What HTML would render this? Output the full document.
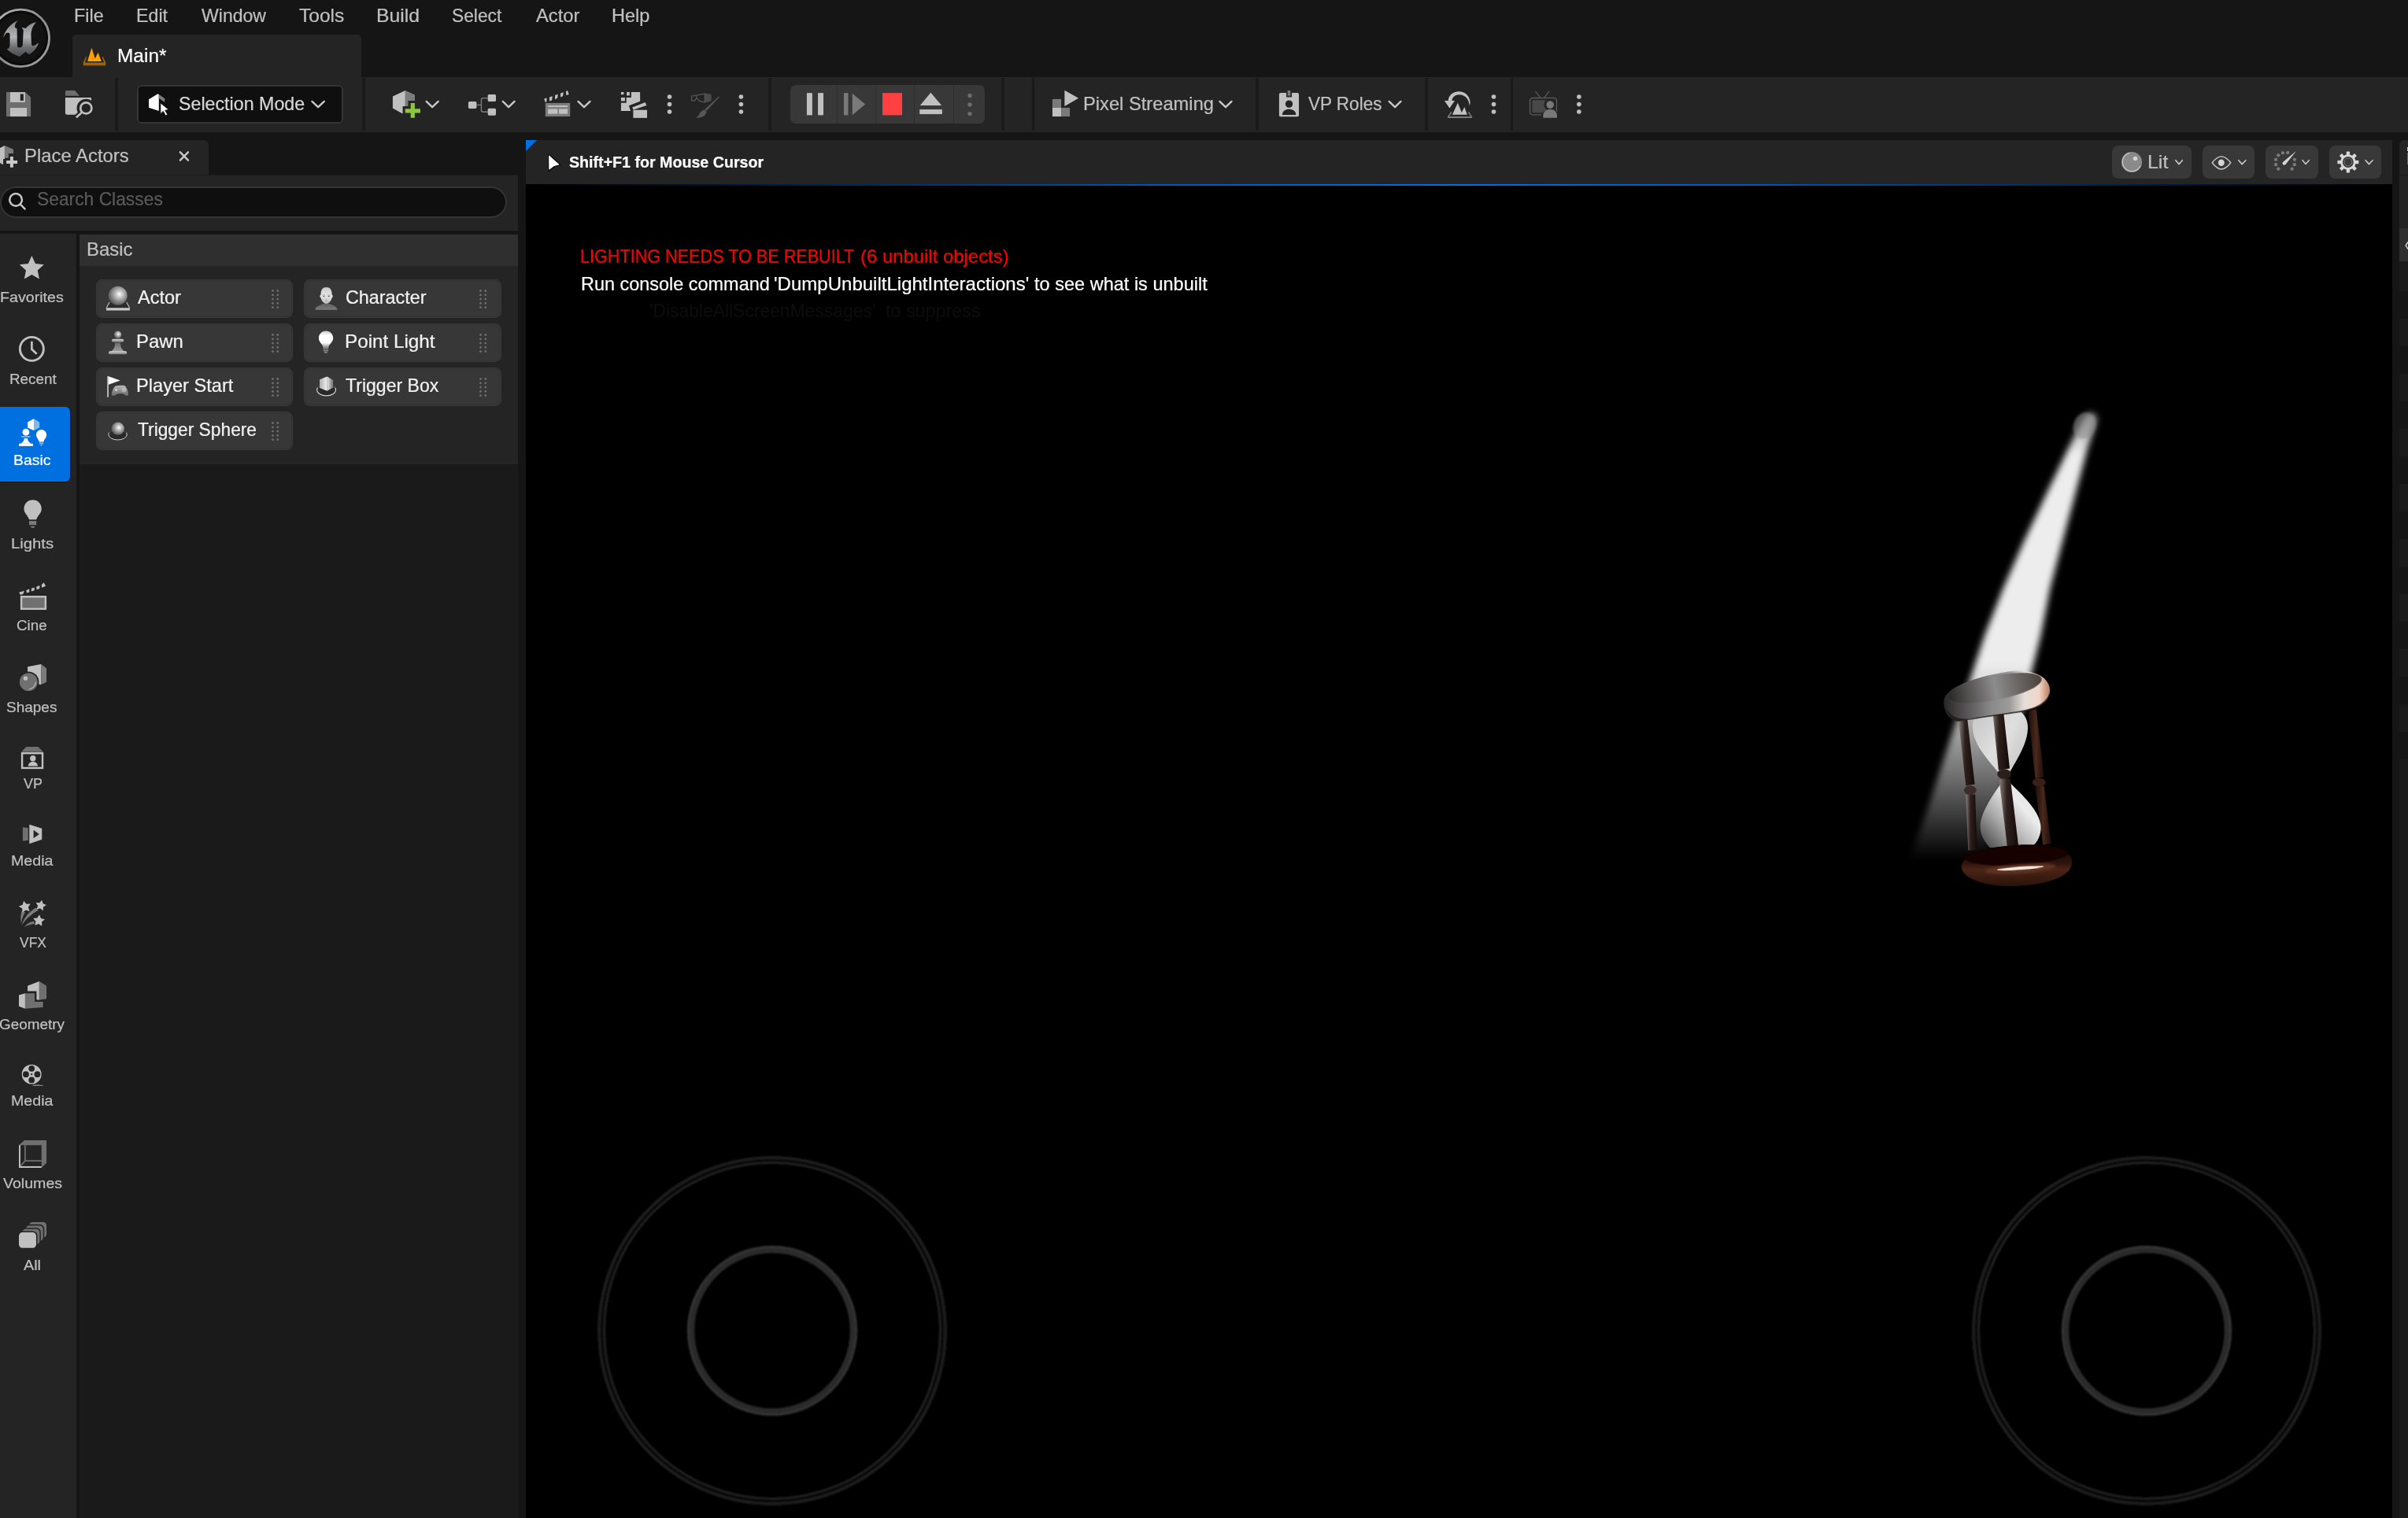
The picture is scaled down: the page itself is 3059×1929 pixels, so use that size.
<!DOCTYPE html>
<html lang="en"><head><meta charset="utf-8"><title>Unreal Editor - Main</title>
<style>
html,body{margin:0;padding:0;background:#151515;}
body{width:3059px;height:1929px;position:relative;overflow:hidden;font-family:"Liberation Sans",sans-serif;}
.b{position:absolute;display:block;}
.t{position:absolute;white-space:nowrap;transform-origin:0 0;display:block;-webkit-text-stroke:0.22px currentColor;}
</style></head><body>
<div class="b" style="left:92px;top:44px;width:367px;height:54px;background:#242424;border-radius:5px 5px 0 0;"></div>
<div class="b" style="left:0px;top:98px;width:3059px;height:70px;background:#242424;"></div>
<div class="b" style="left:146.3px;top:99px;width:3.6px;height:67px;background:#1a1a1a;"></div>
<div class="b" style="left:460.2px;top:99px;width:4px;height:67px;background:#1a1a1a;"></div>
<div class="b" style="left:976.2px;top:99px;width:4px;height:67px;background:#1a1a1a;"></div>
<div class="b" style="left:1271.9px;top:99px;width:4.2px;height:67px;background:#1a1a1a;"></div>
<div class="b" style="left:1310.9px;top:99px;width:3.1px;height:67px;background:#1a1a1a;"></div>
<div class="b" style="left:1595px;top:99px;width:3.75px;height:67px;background:#1a1a1a;"></div>
<div class="b" style="left:1810.4px;top:99px;width:3.8px;height:67px;background:#1a1a1a;"></div>
<div class="b" style="left:1918.9px;top:99px;width:3.3px;height:67px;background:#1a1a1a;"></div>
<div class="b" style="left:174px;top:108px;width:262px;height:49px;background:#0f0f0f;border-radius:5.5px;box-shadow:inset 0 0 0 2px #353535;"></div>
<div class="b" style="left:1004.4px;top:107.9px;width:246.4px;height:48.9px;background:#383838;border-radius:7px;"></div>
<div class="b" style="left:1062.75px;top:108px;width:1.5px;height:49px;background:#2e2e2e;"></div>
<div class="b" style="left:1111.75px;top:108px;width:1.5px;height:49px;background:#2e2e2e;"></div>
<div class="b" style="left:1160.75px;top:108px;width:1.5px;height:49px;background:#2e2e2e;"></div>
<div class="b" style="left:1210.75px;top:108px;width:1.5px;height:49px;background:#2e2e2e;"></div>
<span class="t" style="left:94.38px;top:8.35px;font-size:24.3px;line-height:24.3px;color:#c0c0c0;transform:scaleX(0.9630);">File</span>
<span class="t" style="left:173.14px;top:8.35px;font-size:24.3px;line-height:24.3px;color:#c0c0c0;transform:scaleX(0.9564);">Edit</span>
<span class="t" style="left:255.88px;top:8.35px;font-size:24.3px;line-height:24.3px;color:#c0c0c0;transform:scaleX(0.9492);">Window</span>
<span class="t" style="left:379.51px;top:8.35px;font-size:24.3px;line-height:24.3px;color:#c0c0c0;transform:scaleX(1.0108);">Tools</span>
<span class="t" style="left:477.52px;top:8.35px;font-size:24.3px;line-height:24.3px;color:#c0c0c0;transform:scaleX(1.0189);">Build</span>
<span class="t" style="left:573.98px;top:8.35px;font-size:24.3px;line-height:24.3px;color:#c0c0c0;transform:scaleX(0.9363);">Select</span>
<span class="t" style="left:680.75px;top:8.35px;font-size:24.3px;line-height:24.3px;color:#c0c0c0;transform:scaleX(0.9777);">Actor</span>
<span class="t" style="left:777.12px;top:7.85px;font-size:24.3px;line-height:24.3px;color:#c0c0c0;transform:scaleX(0.9677);">Help</span>
<span class="t" style="left:148.79px;top:59.75px;font-size:23.5px;line-height:23.5px;color:#ffffff;transform:scaleX(1.0401);">Main*</span>
<span class="t" style="left:226.95px;top:119.50px;font-size:24px;line-height:24px;color:#d8d8d8;transform:scaleX(0.9681);">Selection Mode</span>
<span class="t" style="left:1376.10px;top:119.50px;font-size:24px;line-height:24px;color:#c0c0c0;transform:scaleX(0.9877);">Pixel Streaming</span>
<span class="t" style="left:1662.39px;top:119.50px;font-size:24px;line-height:24px;color:#c0c0c0;transform:scaleX(0.9378);">VP Roles</span>
<div class="b" style="left:0px;top:178px;width:265px;height:44px;background:#242424;border-radius:0 6px 0 0;"></div>
<div class="b" style="left:0px;top:222px;width:658px;height:71px;background:#242424;"></div>
<div class="b" style="left:0px;top:222px;width:658px;height:1px;background:#1c1c1c;"></div>
<div class="b" style="left:0px;top:237px;width:643.5px;height:39.5px;background:#0f0f0f;border-radius:20px;box-shadow:inset 0 0 0 2px #353535;"></div>
<span class="t" style="left:31.09px;top:185.50px;font-size:24px;line-height:24px;color:#c0c0c0;transform:scaleX(0.9948);">Place Actors</span>
<span class="t" style="left:46.97px;top:241.20px;font-size:24px;line-height:24px;color:#5a5a5a;transform:scaleX(0.9507);">Search Classes</span>
<div class="b" style="left:0px;top:297px;width:97px;height:1632px;background:#242424;"></div>
<div class="b" style="left:101px;top:297.5px;width:557px;height:40.5px;background:#2f2f2f;"></div>
<div class="b" style="left:101px;top:338px;width:557px;height:251.5px;background:#242424;"></div>
<div class="b" style="left:101px;top:589.5px;width:557px;height:1339.5px;background:#1a1a1a;"></div>
<span class="t" style="left:110.09px;top:304.50px;font-size:24px;line-height:24px;color:#c0c0c0;transform:scaleX(0.9972);">Basic</span>
<div class="b" style="left:122.1px;top:355px;width:250.4px;height:49px;background:#373737;border-radius:8.5px;box-shadow:inset 0 0 0 1px #393939,inset 0 0 0 2px #313131;"></div>
<span class="t" style="left:175.00px;top:366.25px;font-size:24px;line-height:24px;color:#f2f2f2;transform:scaleX(0.9809);">Actor</span>
<svg class="b" style="left:344.75px;top:368.0px;" width="10.0" height="25.0" viewBox="0 0 10 25"><g fill="#6e6e6e"><circle cx="1.5" cy="1.5" r="1.4"/><circle cx="1.5" cy="6.8" r="1.4"/><circle cx="1.5" cy="12.1" r="1.4"/><circle cx="1.5" cy="17.4" r="1.4"/><circle cx="1.5" cy="22.7" r="1.4"/><circle cx="7.75" cy="1.5" r="1.4"/><circle cx="7.75" cy="6.8" r="1.4"/><circle cx="7.75" cy="12.1" r="1.4"/><circle cx="7.75" cy="17.4" r="1.4"/><circle cx="7.75" cy="22.7" r="1.4"/></g></svg>
<div class="b" style="left:385.85px;top:355px;width:251px;height:49px;background:#373737;border-radius:8.5px;box-shadow:inset 0 0 0 1px #393939,inset 0 0 0 2px #313131;"></div>
<span class="t" style="left:438.83px;top:365.75px;font-size:24px;line-height:24px;color:#f2f2f2;transform:scaleX(0.9730);">Character</span>
<svg class="b" style="left:608.5px;top:368.0px;" width="10.0" height="25.0" viewBox="0 0 10 25"><g fill="#6e6e6e"><circle cx="1.5" cy="1.5" r="1.4"/><circle cx="1.5" cy="6.8" r="1.4"/><circle cx="1.5" cy="12.1" r="1.4"/><circle cx="1.5" cy="17.4" r="1.4"/><circle cx="1.5" cy="22.7" r="1.4"/><circle cx="7.75" cy="1.5" r="1.4"/><circle cx="7.75" cy="6.8" r="1.4"/><circle cx="7.75" cy="12.1" r="1.4"/><circle cx="7.75" cy="17.4" r="1.4"/><circle cx="7.75" cy="22.7" r="1.4"/></g></svg>
<div class="b" style="left:122.1px;top:411px;width:250.4px;height:49px;background:#373737;border-radius:8.5px;box-shadow:inset 0 0 0 1px #393939,inset 0 0 0 2px #313131;"></div>
<span class="t" style="left:173.09px;top:422.25px;font-size:24px;line-height:24px;color:#f2f2f2;transform:scaleX(0.9952);">Pawn</span>
<svg class="b" style="left:344.75px;top:424.0px;" width="10.0" height="25.0" viewBox="0 0 10 25"><g fill="#6e6e6e"><circle cx="1.5" cy="1.5" r="1.4"/><circle cx="1.5" cy="6.8" r="1.4"/><circle cx="1.5" cy="12.1" r="1.4"/><circle cx="1.5" cy="17.4" r="1.4"/><circle cx="1.5" cy="22.7" r="1.4"/><circle cx="7.75" cy="1.5" r="1.4"/><circle cx="7.75" cy="6.8" r="1.4"/><circle cx="7.75" cy="12.1" r="1.4"/><circle cx="7.75" cy="17.4" r="1.4"/><circle cx="7.75" cy="22.7" r="1.4"/></g></svg>
<div class="b" style="left:385.85px;top:411px;width:251px;height:49px;background:#373737;border-radius:8.5px;box-shadow:inset 0 0 0 1px #393939,inset 0 0 0 2px #313131;"></div>
<span class="t" style="left:437.56px;top:421.75px;font-size:24px;line-height:24px;color:#f2f2f2;transform:scaleX(1.0102);">Point Light</span>
<svg class="b" style="left:608.5px;top:424.0px;" width="10.0" height="25.0" viewBox="0 0 10 25"><g fill="#6e6e6e"><circle cx="1.5" cy="1.5" r="1.4"/><circle cx="1.5" cy="6.8" r="1.4"/><circle cx="1.5" cy="12.1" r="1.4"/><circle cx="1.5" cy="17.4" r="1.4"/><circle cx="1.5" cy="22.7" r="1.4"/><circle cx="7.75" cy="1.5" r="1.4"/><circle cx="7.75" cy="6.8" r="1.4"/><circle cx="7.75" cy="12.1" r="1.4"/><circle cx="7.75" cy="17.4" r="1.4"/><circle cx="7.75" cy="22.7" r="1.4"/></g></svg>
<div class="b" style="left:122.1px;top:467px;width:250.4px;height:49px;background:#373737;border-radius:8.5px;box-shadow:inset 0 0 0 1px #393939,inset 0 0 0 2px #313131;"></div>
<span class="t" style="left:173.11px;top:477.75px;font-size:24px;line-height:24px;color:#f2f2f2;transform:scaleX(0.9839);">Player Start</span>
<svg class="b" style="left:344.75px;top:480.0px;" width="10.0" height="25.0" viewBox="0 0 10 25"><g fill="#6e6e6e"><circle cx="1.5" cy="1.5" r="1.4"/><circle cx="1.5" cy="6.8" r="1.4"/><circle cx="1.5" cy="12.1" r="1.4"/><circle cx="1.5" cy="17.4" r="1.4"/><circle cx="1.5" cy="22.7" r="1.4"/><circle cx="7.75" cy="1.5" r="1.4"/><circle cx="7.75" cy="6.8" r="1.4"/><circle cx="7.75" cy="12.1" r="1.4"/><circle cx="7.75" cy="17.4" r="1.4"/><circle cx="7.75" cy="22.7" r="1.4"/></g></svg>
<div class="b" style="left:385.85px;top:467px;width:251px;height:49px;background:#373737;border-radius:8.5px;box-shadow:inset 0 0 0 1px #393939,inset 0 0 0 2px #313131;"></div>
<span class="t" style="left:439.04px;top:477.75px;font-size:24px;line-height:24px;color:#f2f2f2;transform:scaleX(0.9600);">Trigger Box</span>
<svg class="b" style="left:608.5px;top:480.0px;" width="10.0" height="25.0" viewBox="0 0 10 25"><g fill="#6e6e6e"><circle cx="1.5" cy="1.5" r="1.4"/><circle cx="1.5" cy="6.8" r="1.4"/><circle cx="1.5" cy="12.1" r="1.4"/><circle cx="1.5" cy="17.4" r="1.4"/><circle cx="1.5" cy="22.7" r="1.4"/><circle cx="7.75" cy="1.5" r="1.4"/><circle cx="7.75" cy="6.8" r="1.4"/><circle cx="7.75" cy="12.1" r="1.4"/><circle cx="7.75" cy="17.4" r="1.4"/><circle cx="7.75" cy="22.7" r="1.4"/></g></svg>
<div class="b" style="left:122.1px;top:523px;width:250.4px;height:49px;background:#373737;border-radius:8.5px;box-shadow:inset 0 0 0 1px #393939,inset 0 0 0 2px #313131;"></div>
<span class="t" style="left:174.54px;top:533.75px;font-size:24px;line-height:24px;color:#f2f2f2;transform:scaleX(0.9488);">Trigger Sphere</span>
<svg class="b" style="left:344.75px;top:536.0px;" width="10.0" height="25.0" viewBox="0 0 10 25"><g fill="#6e6e6e"><circle cx="1.5" cy="1.5" r="1.4"/><circle cx="1.5" cy="6.8" r="1.4"/><circle cx="1.5" cy="12.1" r="1.4"/><circle cx="1.5" cy="17.4" r="1.4"/><circle cx="1.5" cy="22.7" r="1.4"/><circle cx="7.75" cy="1.5" r="1.4"/><circle cx="7.75" cy="6.8" r="1.4"/><circle cx="7.75" cy="12.1" r="1.4"/><circle cx="7.75" cy="17.4" r="1.4"/><circle cx="7.75" cy="22.7" r="1.4"/></g></svg>
<div class="b" style="left:0px;top:516.7px;width:89.3px;height:95.7px;background:#0070e0;border-radius:0 6px 6px 0;box-shadow:0.8px 0.8px 0 #161616;"></div>
<span class="t" style="left:0.43px;top:369.20px;font-size:18.8px;line-height:18.8px;color:#c0c0c0;transform:scaleX(1.0452);">Favorites</span>
<span class="t" style="left:11.99px;top:472.90px;font-size:18.8px;line-height:18.8px;color:#c0c0c0;transform:scaleX(1.0017);">Recent</span>
<span class="t" style="left:17.45px;top:576.20px;font-size:18.8px;line-height:18.8px;color:#ffffff;transform:scaleX(1.0320);">Basic</span>
<span class="t" style="left:13.87px;top:681.50px;font-size:18.8px;line-height:18.8px;color:#c0c0c0;transform:scaleX(1.0805);">Lights</span>
<span class="t" style="left:21.06px;top:786.10px;font-size:18.8px;line-height:18.8px;color:#c0c0c0;transform:scaleX(1.0014);">Cine</span>
<span class="t" style="left:8.14px;top:889.50px;font-size:18.8px;line-height:18.8px;color:#c0c0c0;transform:scaleX(1.0108);">Shapes</span>
<span class="t" style="left:29.91px;top:987.00px;font-size:18.8px;line-height:18.8px;color:#c0c0c0;transform:scaleX(0.9554);">VP</span>
<span class="t" style="left:13.93px;top:1085.10px;font-size:18.8px;line-height:18.8px;color:#c0c0c0;transform:scaleX(1.0437);">Media</span>
<span class="t" style="left:25.41px;top:1189.00px;font-size:18.8px;line-height:18.8px;color:#c0c0c0;transform:scaleX(0.9281);">VFX</span>
<span class="t" style="left:-0.94px;top:1293.10px;font-size:18.8px;line-height:18.8px;color:#c0c0c0;transform:scaleX(1.0050);">Geometry</span>
<span class="t" style="left:13.93px;top:1390.20px;font-size:18.8px;line-height:18.8px;color:#c0c0c0;transform:scaleX(1.0437);">Media</span>
<span class="t" style="left:3.60px;top:1495.10px;font-size:18.8px;line-height:18.8px;color:#c0c0c0;transform:scaleX(1.0428);">Volumes</span>
<span class="t" style="left:30.00px;top:1599.40px;font-size:18.8px;line-height:18.8px;color:#c0c0c0;transform:scaleX(1.0536);">All</span>
<div class="b" style="left:668px;top:178px;width:2371px;height:1751px;background:#000000;"></div>
<div class="b" style="left:668px;top:178px;width:2371px;height:56.3px;background:#242424;"></div>
<div class="b" style="left:668px;top:234px;width:2371px;height:2px;background:#000;background:linear-gradient(90deg,#000 0%,#02142c 10%,#0058c0 35%,#0070e0 50%,#0058c0 65%,#02142c 90%,#000 100%);"></div>
<svg class="b" style="left:668px;top:178px" width="14" height="14" viewBox="0 0 14 14"><path d="M0 0H14L0 14Z" fill="#0070e0"/></svg>
<span class="t" style="left:723.41px;top:195.25px;font-size:21px;line-height:21px;color:#ffffff;font-weight:700;transform:scaleX(0.9351);">Shift+F1 for Mouse Cursor</span>
<span class="t" style="left:737.02px;top:314.95px;font-size:23.6px;line-height:23.6px;color:#ff0000;transform:scaleX(0.9161);">LIGHTING NEEDS TO BE REBUILT</span>
<span class="t" style="left:1093.07px;top:314.95px;font-size:23.6px;line-height:23.6px;color:#ff0000;transform:scaleX(1.0130);">(6 unbuilt objects)</span>
<span class="t" style="left:737.87px;top:349.95px;font-size:23.6px;line-height:23.6px;color:#ffffff;transform:scaleX(0.9935);">Run console command</span>
<span class="t" style="left:982.55px;top:349.95px;font-size:23.6px;line-height:23.6px;color:#ffffff;transform:scaleX(1.0182);">'DumpUnbuiltLightInteractions'</span>
<span class="t" style="left:1314.15px;top:349.95px;font-size:23.6px;line-height:23.6px;color:#ffffff;transform:scaleX(0.9973);">to see what is unbuilt</span>
<span class="t" style="left:824.86px;top:384.10px;font-size:23.6px;line-height:23.6px;color:#0d0d0d;transform:scaleX(0.9696);">'DisableAllScreenMessages'</span>
<span class="t" style="left:1124.65px;top:384.10px;font-size:23.6px;line-height:23.6px;color:#0d0d0d;transform:scaleX(0.9890);">to suppress</span>
<div class="b" style="left:2683px;top:185px;width:101px;height:42px;background:#383838;border-radius:8px;"></div>
<div class="b" style="left:2798px;top:185px;width:66px;height:42px;background:#383838;border-radius:8px;"></div>
<div class="b" style="left:2878px;top:185px;width:66.6px;height:42px;background:#383838;border-radius:8px;"></div>
<div class="b" style="left:2959px;top:185px;width:66px;height:42px;background:#383838;border-radius:8px;"></div>
<span class="t" style="left:2728.00px;top:194.90px;font-size:23.6px;line-height:23.6px;color:#c0c0c0;transform:scaleX(1.0571);">Lit</span>
<div class="b" style="left:3047.8px;top:178.3px;width:11.2px;height:43.7px;background:#242424;border-radius:6px 0 0 0;"></div>
<div class="b" style="left:3047.8px;top:222px;width:11.2px;height:68px;background:#242424;"></div>
<div class="b" style="left:3047.8px;top:221.6px;width:11.2px;height:1.2px;background:#1a1a1a;"></div>
<div class="b" style="left:3048px;top:289.5px;width:11px;height:42.5px;background:#2f2f2f;"></div>
<div class="b" style="left:3048px;top:332px;width:11px;height:38px;background:#1b1b1b;"></div>
<div class="b" style="left:3048px;top:405px;width:11px;height:35px;background:#1b1b1b;"></div>
<div class="b" style="left:3048px;top:475px;width:11px;height:35px;background:#1b1b1b;"></div>
<div class="b" style="left:3048px;top:545px;width:11px;height:35px;background:#1b1b1b;"></div>
<div class="b" style="left:3048px;top:615px;width:11px;height:35px;background:#1b1b1b;"></div>
<div class="b" style="left:3048px;top:685px;width:11px;height:35px;background:#1b1b1b;"></div>
<div class="b" style="left:3048px;top:755px;width:11px;height:35px;background:#1b1b1b;"></div>
<div class="b" style="left:3048px;top:825px;width:11px;height:35px;background:#1b1b1b;"></div>
<div class="b" style="left:3048px;top:895px;width:11px;height:35px;background:#1b1b1b;"></div>
<div class="b" style="left:3048px;top:965px;width:11px;height:964px;background:#1b1b1b;"></div>
<div class="b" style="left:3057.6px;top:187.4px;width:1.4px;height:4.7px;background:#d0d0d0;"></div>
<div class="b" style="left:3057.6px;top:193.7px;width:1.4px;height:15.3px;background:#6a6a6a;"></div>
<svg class="b" style="left:3055px;top:306px" width="4" height="12" viewBox="0 0 4 12"><path d="M4 1.5L1.2 6L4 10.5" fill="none" stroke="#c8c8c8" stroke-width="1.6"/></svg>
<svg class="b" style="left:0px;top:0px;" width="150" height="95" viewBox="0 0 2397.0 1518.1">
<defs>
<linearGradient id="ug" x1="0" y1="0" x2="0" y2="1"><stop offset="0" stop-color="#808284"/><stop offset=".45" stop-color="#b2b4b6"/><stop offset=".75" stop-color="#6a6c6e"/><stop offset="1" stop-color="#4a4c4e"/></linearGradient>
<radialGradient id="uc" cx=".5" cy=".5" r=".5"><stop offset="0" stop-color="#131313"/><stop offset=".82" stop-color="#121212"/><stop offset="1" stop-color="#000"/></radialGradient>
<linearGradient id="ur" x1="0" y1="0" x2="1" y2="1"><stop offset="0" stop-color="#b8babb"/><stop offset=".5" stop-color="#8a8c8e"/><stop offset="1" stop-color="#a0a2a4"/></linearGradient>
</defs>
<circle cx="420" cy="773" r="590" fill="url(#uc)"/>
<circle cx="420" cy="773" r="580" fill="none" stroke="url(#ur)" stroke-width="46"/>
<path fill="url(#ug)" d="M65 770C90 640 200 480 370 415C320 455 295 500 305 560L345 585L350 930C355 975 420 985 460 925L475 610L440 555L520 575C580 500 660 460 735 450C670 520 630 600 630 720L640 900C645 945 690 945 785 865C760 960 680 1060 590 1105L520 1050L400 1150C300 1120 200 1060 135 995C185 990 200 960 200 900L200 700C200 660 150 650 120 680C100 700 80 735 65 770Z"/>
<path fill="#9c6410" d="M1745 1150L1690 1265V1330H2145V1265L2090 1150L2072 1160L2112 1272H1722L1763 1160Z"/>
<path fill="#ffa000" d="M1775 1245L1860 972L1930 1190L1990 1068L2060 1245Z"/>
</svg>
<svg class="b" style="left:0px;top:105px;" width="240" height="55" viewBox="0 0 2408.0 551.8">
<path fill="#6e6e6e" d="M80 120H320L392 185V432H80Z"/>
<rect x="130" y="122" width="190" height="128" fill="#c0c0c0"/>
<rect x="258" y="145" width="42" height="85" fill="#242424"/>
<rect x="130" y="322" width="212" height="110" fill="#c0c0c0"/>
<path fill="#6e6e6e" d="M832 115Q832 100 847 100H955L1012 168H832Z"/>
<path fill="#c0c0c0" d="M832 190H1150Q1165 190 1165 205V410H855Q832 410 832 387Z"/>
<circle cx="1097" cy="325" r="118" fill="#242424"/>
<path d="M1045 378L950 465" stroke="#242424" stroke-width="70" />
<circle cx="1097" cy="325" r="71" fill="none" stroke="#c0c0c0" stroke-width="27"/>
<path d="M1043 380L972 445" stroke="#c0c0c0" stroke-width="27"/>
<path fill="#ffffff" d="M1897 213L2012 143L2025 150V362L1897 318Z"/>
<path fill="#7c7c7c" d="M2022 148L2100 203V250L2025 197Z"/>
<path fill="#ffffff" stroke="#0f0f0f" stroke-width="10" stroke-linejoin="round" d="M2045 258V398L2080 366L2110 422L2136 407L2106 354L2152 346Z"/>
</svg>
<svg class="b" style="left:380px;top:105px;" width="240" height="55" viewBox="0 0 2408.0 551.8">
<path d="M165 240L242 313L319 240" fill="none" stroke="#c8c8c8" stroke-width="24" stroke-linecap="round" stroke-linejoin="round"/>
<path fill="#c0c0c0" d="M1193 175L1353 100V395L1315 395L1193 325Z"/>
<path fill="#7c7c7c" d="M1353 100L1475 155V330L1353 395Z"/>
<path d="M1448 230V482M1320 360H1577" stroke="#242424" stroke-width="116" fill="none"/>
<path d="M1448 262V450M1352 360H1545" stroke="#8cc63f" stroke-width="52" fill="none"/>
<path d="M1622 240L1697 313L1773 240" fill="none" stroke="#c8c8c8" stroke-width="24" stroke-linecap="round" stroke-linejoin="round"/>
</svg>
<svg class="b" style="left:580px;top:105px;" width="240" height="55" viewBox="0 0 2408.0 551.8">
<path d="M255 285H315M398 197H340Q315 197 315 222V348Q315 373 340 373H398" fill="none" stroke="#7c7c7c" stroke-width="14"/>
<rect x="150" y="240" width="105" height="90" rx="16" fill="#c0c0c0"/>
<rect x="398" y="150" width="104" height="92" rx="16" fill="#c0c0c0"/>
<rect x="398" y="328" width="104" height="90" rx="16" fill="#c0c0c0"/>
<path d="M590 240L663 313L738 240" fill="none" stroke="#c8c8c8" stroke-width="24" stroke-linecap="round" stroke-linejoin="round"/>
<rect x="1132" y="260" width="315" height="172" fill="#7c7c7c"/>
<rect x="1165" y="292" width="250" height="20" fill="#c0c0c0"/>
<rect x="1165" y="335" width="123" height="63" fill="#c0c0c0"/>
<rect x="1305" y="335" width="110" height="63" fill="#c0c0c0"/>
<path fill="#c0c0c0" d="M1115 205L1150 195L1147 243L1132 250 Z"/><path fill="#c0c0c0" d="M1183 185L1222 172L1215 225L1185 237 Z"/><path fill="#c0c0c0" d="M1255 160L1292 147L1285 198L1255 212 Z"/><path fill="#c0c0c0" d="M1325 135L1363 122L1355 172L1325 185 Z"/><path fill="#c0c0c0" d="M1395 110L1415 100L1432 150L1397 160 Z"/>
<path d="M1550 240L1625 313L1701 240" fill="none" stroke="#c8c8c8" stroke-width="24" stroke-linecap="round" stroke-linejoin="round"/>
</svg>
<svg class="b" style="left:770px;top:105px;" width="240" height="55" viewBox="0 0 2408.0 551.8">
<rect x="190" y="120" width="35" height="32" fill="#c0c0c0"/>
<rect x="262" y="120" width="38" height="45" fill="#c0c0c0"/>
<rect x="190" y="190" width="50" height="45" fill="#c0c0c0"/>
<path fill="#c0c0c0" d="M320 120H433V238L290 293L312 360H190V258H258V190H320Z"/>
<path fill="#c0c0c0" d="M332 315L498 250L515 290L348 347Z"/>
<rect x="345" y="348" width="177" height="102" fill="#c0c0c0"/>
<circle cx="808" cy="180" r="28" fill="#c0c0c0"/><circle cx="808" cy="277" r="28" fill="#c0c0c0"/><circle cx="808" cy="372" r="28" fill="#c0c0c0"/>
<path fill="#4a4a4a" d="M1258 135L1340 150V235L1258 255Z"/>
<path fill="none" stroke="#565656" stroke-width="13" stroke-linejoin="round" d="M1089 172L1258 142V250L1192 236L1152 195L1128 232L1089 228Z"/>
<path fill="none" stroke="#565656" stroke-width="10" d="M1152 160V195"/>
<path fill="#565656" d="M1432 178L1442 186L1278 362L1254 344Z"/>
<path fill="#565656" d="M1250 345L1280 368C1272 425 1220 452 1140 450C1195 425 1175 372 1250 345Z"/>
<circle cx="1720" cy="180" r="28" fill="#c0c0c0"/><circle cx="1720" cy="277" r="28" fill="#c0c0c0"/><circle cx="1720" cy="372" r="28" fill="#c0c0c0"/>
</svg>
<svg class="b" style="left:1000px;top:105px;" width="240" height="55" viewBox="0 0 2408.0 551.8">
<rect x="250" y="132" width="70" height="283" fill="#c0c0c0"/>
<rect x="392" y="132" width="70" height="283" fill="#c0c0c0"/>
<rect x="722" y="132" width="56" height="283" fill="#7a7a7a"/>
<path fill="#7a7a7a" d="M830 138L995 275L830 414Z"/>
<rect x="1215" y="132" width="250" height="283" fill="#ff4040"/>
<path fill="#c0c0c0" d="M1830 128L1968 292H1693Z"/>
<rect x="1688" y="342" width="287" height="60" fill="#c0c0c0"/>
<circle cx="2328" cy="165" r="27" fill="#6c6c6c"/><circle cx="2328" cy="280" r="27" fill="#6c6c6c"/><circle cx="2328" cy="397" r="27" fill="#6c6c6c"/>
</svg>
<svg class="b" style="left:1320px;top:105px;overflow:visible;" width="240" height="55" viewBox="0 0 2408.0 551.8">
<rect x="170" y="210" width="112" height="110" fill="#7a7a7a"/>
<rect x="170" y="320" width="112" height="112" fill="#c0c0c0"/>
<rect x="282" y="320" width="110" height="112" fill="#7a7a7a"/>
<path fill="#c0c0c0" d="M325 98L503 198L325 300Z"/>
<path d="M2302 240L2378 313L2454 240" fill="none" stroke="#c8c8c8" stroke-width="24" stroke-linecap="round" stroke-linejoin="round"/>
</svg>
<svg class="b" style="left:1600px;top:105px;" width="240" height="55" viewBox="0 0 2408.0 551.8">
<rect x="250" y="130" width="252" height="305" rx="20" fill="#c0c0c0"/>
<rect x="342" y="125" width="70" height="60" fill="#242424"/>
<rect x="358" y="100" width="37" height="68" fill="#7a7a7a"/>
<circle cx="377" cy="272" r="47" fill="#242424"/>
<path fill="#242424" d="M290 412C290 315 465 315 465 412Z"/>
<path d="M1652 240L1727 313L1801 240" fill="none" stroke="#c8c8c8" stroke-width="24" stroke-linecap="round" stroke-linejoin="round"/>
</svg>
<svg class="b" style="left:1820px;top:105px;" width="240" height="55" viewBox="0 0 2408.0 551.8">
<path fill="#c0c0c0" d="M198 235C200 150 270 112 335 112C420 112 482 180 478 262L468 296C468 220 420 152 335 152C290 152 247 182 245 235Z"/>
<path fill="#c0c0c0" d="M150 232H282L215 325Z"/>
<path fill="#c0c0c0" d="M250 408L320 258L370 380L405 312L440 408Z"/>
<path fill="#7a7a7a" d="M232 370L190 435V452H503V435L462 370L448 378L482 432H212L246 378Z"/>
<circle cx="778" cy="180" r="28" fill="#c0c0c0"/><circle cx="778" cy="277" r="28" fill="#c0c0c0"/><circle cx="778" cy="372" r="28" fill="#c0c0c0"/>
<path d="M1310 112L1375 195M1485 112L1420 195" stroke="#5a5a5a" stroke-width="14" fill="none"/>
<rect x="1240" y="195" width="340" height="215" rx="36" fill="none" stroke="#5a5a5a" stroke-width="14"/>
<rect x="1268" y="222" width="284" height="162" rx="16" fill="#484848"/>
<circle cx="1497" cy="282" r="78" fill="#242424"/>
<path fill="#242424" d="M1375 460C1375 300 1620 300 1620 460Z"/>
<circle cx="1497" cy="282" r="48" fill="#787878"/>
<path fill="#787878" d="M1408 450V420C1408 315 1585 315 1585 420V450Z"/>
<circle cx="1865" cy="180" r="28" fill="#c0c0c0"/><circle cx="1865" cy="277" r="28" fill="#c0c0c0"/><circle cx="1865" cy="372" r="28" fill="#c0c0c0"/>
</svg>
<svg class="b" style="left:660px;top:172px;" width="120" height="68" viewBox="0 0 2408.0 1364.5">
<defs><filter id="cb" x="-20%" y="-20%" width="140%" height="140%"><feGaussianBlur stdDeviation="7"/></filter></defs>
<path d="M742 486L1038 748L882 800L746 903Z" fill="#fff" stroke="#101010" stroke-width="34" stroke-linejoin="round" filter="url(#cb)"/>
<path d="M748 505L1015 745L872 785L752 880Z" fill="#fff" filter="url(#cb)"/>
<path d="M755 530L985 740L865 770L758 855Z" fill="#fff"/>
</svg>
<svg class="b" style="left:2680px;top:180px;" width="180" height="52" viewBox="0 0 2408.0 695.6">
<circle cx="375" cy="348" r="175" fill="#8a8a8a"/>
<path d="M330 192A160 160 0 1 0 520 420" fill="none" stroke="#c8c8c8" stroke-width="16" stroke-linecap="round"/>
<circle cx="435" cy="288" r="37" fill="#d4d4d4"/>
<path d="M1122 317L1178 383L1236 317" fill="none" stroke="#c8c8c8" stroke-width="21" stroke-linecap="round" stroke-linejoin="round"/>
<path d="M1742 358C1800 285 1850 252 1897 252C1950 252 2000 285 2058 358C2000 432 1950 468 1897 468C1850 468 1800 432 1742 358Z" fill="none" stroke="#c8c8c8" stroke-width="18" stroke-linejoin="round"/>
<ellipse cx="1897" cy="358" rx="53" ry="58" fill="#d4d4d4"/>
<path d="M2192 317L2250 383L2313 317" fill="none" stroke="#c8c8c8" stroke-width="21" stroke-linecap="round" stroke-linejoin="round"/>
</svg>
<svg class="b" style="left:2870px;top:180px;" width="180" height="52" viewBox="0 0 2408.0 695.6">
<rect x="300" y="438" width="50" height="50" fill="#7c7c7c" transform="rotate(45 325 463)"/><rect x="257" y="365" width="50" height="50" fill="#7c7c7c" transform="rotate(15 282 390)"/><rect x="257" y="280" width="50" height="50" fill="#7c7c7c" transform="rotate(-15 282 305)"/><rect x="300" y="207" width="50" height="50" fill="#7c7c7c" transform="rotate(-45 325 232)"/><rect x="375" y="165" width="50" height="50" fill="#7c7c7c" transform="rotate(-75 400 190)"/><rect x="460" y="162" width="50" height="50" fill="#7c7c7c" transform="rotate(-100 485 187)"/><rect x="575" y="280" width="50" height="50" fill="#7c7c7c" transform="rotate(15 600 305)"/><rect x="575" y="365" width="50" height="50" fill="#7c7c7c" transform="rotate(-15 600 390)"/><rect x="532" y="438" width="50" height="50" fill="#7c7c7c" transform="rotate(-45 557 463)"/>
<path d="M628 160L398 352A32 32 0 0 0 445 392Z" fill="#d4d4d4"/>
<path d="M737 317L790 380L846 317" fill="none" stroke="#c8c8c8" stroke-width="21" stroke-linecap="round" stroke-linejoin="round"/>
<rect x="1481" y="168" width="58" height="70" fill="#d8d8d8" transform="rotate(0 1510 348)"/><rect x="1481" y="168" width="58" height="70" fill="#d8d8d8" transform="rotate(45 1510 348)"/><rect x="1481" y="168" width="58" height="70" fill="#d8d8d8" transform="rotate(90 1510 348)"/><rect x="1481" y="168" width="58" height="70" fill="#d8d8d8" transform="rotate(135 1510 348)"/><rect x="1481" y="168" width="58" height="70" fill="#d8d8d8" transform="rotate(180 1510 348)"/><rect x="1481" y="168" width="58" height="70" fill="#d8d8d8" transform="rotate(225 1510 348)"/><rect x="1481" y="168" width="58" height="70" fill="#d8d8d8" transform="rotate(270 1510 348)"/><rect x="1481" y="168" width="58" height="70" fill="#d8d8d8" transform="rotate(315 1510 348)"/>
<circle cx="1510" cy="348" r="112" fill="none" stroke="#d8d8d8" stroke-width="38"/>
<circle cx="1510" cy="348" r="65" fill="none" stroke="#8a8a8a" stroke-width="10"/>
<path d="M1807 317L1865 383L1928 317" fill="none" stroke="#c8c8c8" stroke-width="21" stroke-linecap="round" stroke-linejoin="round"/>
</svg>
<svg class="b" style="left:0px;top:180px;" width="150" height="95" viewBox="0 0 2397.0 1518.1">
<path fill="#c0c0c0" d="M-10 135L95 80V470L70 470L-10 425Z"/>
<path fill="#7a7a7a" d="M95 80L272 155V330H95Z"/>
<path d="M238 305V525M130 415H352" stroke="#242424" stroke-width="130" fill="none" stroke-linecap="square"/>
<path d="M238 305V525M130 415H352" stroke="#cacaca" stroke-width="64" fill="none"/>
<circle cx="321" cy="1181" r="126" fill="none" stroke="#c8c8c8" stroke-width="40"/>
<path d="M412 1270L515 1377" stroke="#c8c8c8" stroke-width="38"/>
</svg>
<svg class="b" style="left:200px;top:172px;" width="100" height="68" viewBox="0 0 2232.0 1517.8"><path d="M645 478L870 708M870 478L645 708" stroke="#c8c8c8" stroke-width="55" stroke-linecap="round"/></svg>
<svg class="b" style="left:125px;top:355px;" width="160" height="100" viewBox="0 0 2408.0 1505.0">
<defs>
<radialGradient id="sg" cx=".58" cy=".42" r=".62"><stop offset="0" stop-color="#ffffff"/><stop offset=".3" stop-color="#c4c4c4"/><stop offset=".72" stop-color="#7c7c7c"/><stop offset="1" stop-color="#525252"/></radialGradient>
<linearGradient id="pg" x1="0" y1="0" x2="0" y2="1"><stop offset="0" stop-color="#6a6a6a"/><stop offset="1" stop-color="#a0a0a0"/></linearGradient>
<linearGradient id="pg2" x1="0" y1="0" x2="0" y2="1"><stop offset="0" stop-color="#d8d8d8"/><stop offset="1" stop-color="#7a7a7a"/></linearGradient>
</defs>
<path d="M212 435L150 545V595H600V545L538 435Z" fill="#2c2c2c"/>
<path d="M212 435L152 548M538 435L598 548" stroke="#c8c8c8" stroke-width="16" fill="none"/>
<rect x="150" y="545" width="450" height="50" fill="#c8c8c8"/>
<circle cx="372" cy="312" r="180" fill="url(#sg)"/>
<circle cx="370" cy="1058" r="72" fill="url(#sg)"/>
<rect x="255" y="1140" width="230" height="62" rx="30" fill="url(#pg2)"/>
<path d="M318 1212H422C425 1300 440 1340 505 1380H235C300 1340 315 1300 318 1212Z" fill="url(#pg)"/>
<rect x="195" y="1375" width="350" height="58" rx="24" fill="url(#pg2)"/>
</svg>
<svg class="b" style="left:125px;top:467px;" width="160" height="108" viewBox="0 0 2249.0 1518.1">
<defs><linearGradient id="gp" x1="0" y1="0" x2="0" y2="1"><stop offset="0" stop-color="#b8b8b8"/><stop offset="1" stop-color="#686868"/></linearGradient></defs>
<rect x="158" y="155" width="24" height="375" fill="#c8c8c8"/>
<path d="M182 158L390 232L182 305Z" fill="#ffffff"/>
<path d="M300 335C330 322 440 315 470 325C510 360 535 440 535 490C520 515 490 512 470 490C440 462 340 462 310 490C290 512 250 515 237 490C240 440 265 360 300 335Z" fill="url(#gp)"/>
<path d="M318 378V424M295 401H341" stroke="#fff" stroke-width="10"/>
<circle cx="455" cy="400" r="34" fill="none" stroke="#e8e8e8" stroke-width="8"/>
<path d="M455 380V420M435 400H475" stroke="#e8e8e8" stroke-width="7"/>
<ellipse cx="345" cy="1195" rx="165" ry="98" fill="#2a2a2a" stroke="#d0d0d0" stroke-width="14"/>
<path d="M190 1160A165 98 0 0 1 500 1160" fill="none" stroke="#353535" stroke-width="18"/>
<circle cx="348" cy="1092" r="115" fill="url(#sg)"/>
</svg>
<svg class="b" style="left:388px;top:355px;" width="160" height="100" viewBox="0 0 2408.0 1505.0">
<defs>
<linearGradient id="hg" x1="0" y1="0" x2="0" y2="1"><stop offset="0" stop-color="#c8c8c8"/><stop offset=".5" stop-color="#e8e8e8"/><stop offset="1" stop-color="#bcbcbc"/></linearGradient>
<linearGradient id="bg2" x1="0" y1="0" x2="0" y2="1"><stop offset="0" stop-color="#5e5e5e"/><stop offset="1" stop-color="#7c7c7c"/></linearGradient>
<linearGradient id="lb" x1="0" y1="0" x2="0" y2="1"><stop offset="0" stop-color="#c8c8c8"/><stop offset=".28" stop-color="#ffffff"/><stop offset=".72" stop-color="#ffffff"/><stop offset="1" stop-color="#909090"/></linearGradient>
</defs>
<path d="M185 585C190 520 260 500 345 462H455C540 500 605 520 612 585Z" fill="url(#bg2)"/>
<path d="M400 150C470 150 505 200 505 270L508 300C530 300 528 340 505 355C495 410 450 465 400 465C350 465 305 410 295 355C272 340 270 300 292 300L295 270C295 200 330 150 400 150Z" fill="url(#hg)"/>
<path d="M325 318H378M422 318H475" stroke="#555" stroke-width="9"/>
<circle cx="352" cy="325" r="9" fill="#333"/><circle cx="447" cy="325" r="9" fill="#333"/>
<path d="M318 298Q350 285 382 298M418 298Q450 285 482 298" stroke="#9a9a9a" stroke-width="8" fill="none"/>
<path d="M385 378H415M375 412H425" stroke="#8a8a8a" stroke-width="7"/>
<path d="M392 985C470 985 530 1045 530 1125C530 1200 450 1240 440 1300H340C330 1240 254 1200 254 1125C254 1045 315 985 392 985Z" fill="url(#lb)"/>
<rect x="338" y="1300" width="102" height="28" fill="#8e8e8e"/>
<rect x="338" y="1328" width="102" height="18" fill="#555"/>
<rect x="340" y="1346" width="98" height="22" fill="#8e8e8e"/>
<rect x="342" y="1368" width="94" height="14" fill="#555"/>
<path d="M345 1382H435L405 1415H375Z" fill="#7a7a7a"/>
</svg>
<svg class="b" style="left:388px;top:467px;" width="160" height="53" viewBox="0 0 2408.0 797.7">
<defs>
<linearGradient id="tb1" x1="0" y1="0" x2="1" y2="0"><stop offset="0" stop-color="#b0b0b0"/><stop offset="1" stop-color="#f2f2f2"/></linearGradient>
<linearGradient id="tb2" x1="0" y1="0" x2="1" y2="0"><stop offset="0" stop-color="#e8e8e8"/><stop offset="1" stop-color="#707070"/></linearGradient>
</defs>
<ellipse cx="400" cy="428" rx="180" ry="112" fill="#2a2a2a" stroke="#d8d8d8" stroke-width="16"/>
<path d="M232 390A180 112 0 0 1 568 390" fill="none" stroke="#353535" stroke-width="20"/>
<path d="M272 228L415 172V448L272 390Z" fill="url(#tb1)"/>
<path d="M415 172L530 240V385L415 448Z" fill="url(#tb2)"/>
</svg>
<svg class="b" style="left:0px;top:318px;" width="100" height="147" viewBox="0 0 1033.0 1518.5">
<path fill="#c0c0c0" d="M417.0 72.0L464.0 175.3L576.8 188.1L493.1 264.7L515.7 375.9L417.0 320.0L318.3 375.9L340.9 264.7L257.2 188.1L370.0 175.3Z"/>
<circle cx="417" cy="1295" r="155" fill="none" stroke="#c0c0c0" stroke-width="30"/>
<path d="M417 1195V1300L482 1362" fill="none" stroke="#c0c0c0" stroke-width="28"/>
</svg>
<svg class="b" style="left:0px;top:525px;" width="100" height="147" viewBox="0 0 1033.0 1518.5">
<path fill="#fff" d="M362 118L445 72V228L362 190Z"/>
<path fill="#80b8f0" d="M445 72L518 118V190L445 228Z"/>
<circle cx="340" cy="250" r="45" fill="#fff"/>
<rect x="280" y="300" width="120" height="18" fill="#80b8f0"/>
<path fill="#fff" d="M318 330H362C364 365 380 385 410 400H270C300 385 316 365 318 330Z"/>
<rect x="248" y="400" width="186" height="32" fill="#fff"/>
<path fill="#fff" d="M543 217C582 217 611 248 611 285C611 325 578 345 572 378H514C508 345 475 325 475 285C475 248 504 217 543 217Z"/>
<rect x="515" y="386" width="56" height="20" fill="#80b8f0"/>
<path fill="#80b8f0" d="M522 412H564L543 432Z"/>
<path fill="#c0c0c0" d="M430 1140C495 1140 545 1190 545 1255C545 1320 490 1345 477 1398H383C370 1345 315 1320 315 1255C315 1190 365 1140 430 1140Z"/>
<rect x="382" y="1415" width="95" height="53" fill="#7a7a7a"/>
<path fill="#7a7a7a" d="M395 1485H465L445 1506H415Z"/>
</svg>
<svg class="b" style="left:0px;top:735px;" width="100" height="147" viewBox="0 0 1033.0 1518.5">
<path fill="#c0c0c0" d="M250 183L318 162L305 205L268 218 Z"/><path fill="#c0c0c0" d="M345 155L385 140L385 180L350 192 Z"/><path fill="#c0c0c0" d="M412 132L452 118L452 158L412 170 Z"/><path fill="#c0c0c0" d="M478 108L520 92L520 135L482 148 Z"/><path fill="#c0c0c0" d="M545 85L575 55L600 100L548 122 Z"/>
<rect x="280" y="240" width="318" height="160" fill="#707070" stroke="#c0c0c0" stroke-width="25"/>
<path fill="#c0c0c0" d="M362 1160L540 1125V1395L362 1360Z"/>
<path fill="#7a7a7a" d="M540 1125L610 1180V1360L540 1395Z"/>
<circle cx="375" cy="1360" r="136" fill="#242424"/>
<circle cx="375" cy="1360" r="118" fill="#707070"/>
<circle cx="335" cy="1312" r="28" fill="#c0c0c0"/>
<path d="M385 1452A95 95 0 0 0 468 1368" fill="none" stroke="#b0b0b0" stroke-width="14" stroke-linecap="round"/>
</svg>
<svg class="b" style="left:0px;top:940px;" width="100" height="147" viewBox="0 0 1033.0 1518.5">
<path fill="#707070" d="M345 92H500L568 160H280Z"/>
<rect x="290" y="177" width="268" height="194" fill="#242424" stroke="#c0c0c0" stroke-width="25"/>
<circle cx="432" cy="245" r="38" fill="#c0c0c0"/>
<path fill="#c0c0c0" d="M370 345C370 270 495 270 495 345Z"/>
<path fill="#707070" d="M298 1150L370 1160V1320L298 1330Z"/>
<path fill="#c0c0c0" d="M385 1112L550 1165V1310L385 1365Z"/>
<path fill="#242424" d="M440 1185L515 1240L440 1295Z"/>
</svg>
<svg class="b" style="left:0px;top:1140px;" width="100" height="147" viewBox="0 0 1033.0 1518.5">
<path fill="#7a7a7a" d="M285 185L330 200C300 250 285 300 278 345C268 290 270 235 285 185Z"/>
<path fill="#7a7a7a" d="M470 140L505 170C400 230 330 300 285 372C315 270 380 190 470 140Z"/>
<path fill="#7a7a7a" d="M445 318L455 350C400 355 360 370 318 392C350 350 395 325 445 318Z"/>
<path fill="#c0c0c0" d="M311.0 49.8L345.1 91.6L399.0 89.0L369.8 134.4L388.9 184.9L336.7 171.1L294.6 204.9L291.6 151.0L246.4 121.4L296.8 101.9Z"/>
<path fill="#c0c0c0" d="M550.4 37.6L563.2 84.6L608.6 102.3L567.9 129.0L565.1 177.6L527.1 147.2L480.0 159.5L497.2 114.0L470.9 73.0L519.5 75.3Z"/>
<path fill="#c0c0c0" d="M517.0 230.3L536.9 279.1L587.9 292.0L547.7 326.0L551.2 378.6L506.4 350.8L457.5 370.4L470.1 319.2L436.4 278.7L488.9 274.9Z"/>
<path fill="#c0c0c0" d="M362 1165L515 1105V1350L480 1345V1235H362Z"/>
<path fill="#707070" d="M515 1105L610 1165V1335L515 1350Z"/>
<path fill="#c0c0c0" d="M248 1285L330 1262V1465L248 1432Z"/>
<path fill="#707070" d="M330 1262H455V1375H565V1445L330 1465Z"/>
</svg>
<svg class="b" style="left:0px;top:1345px;" width="100" height="147" viewBox="0 0 1033.0 1518.5">
<circle cx="415" cy="208" r="128" fill="#c0c0c0"/>
<circle cx="415" cy="132" r="40" fill="#242424"/><circle cx="340" cy="208" r="40" fill="#242424"/><circle cx="490" cy="208" r="40" fill="#242424"/><circle cx="415" cy="283" r="40" fill="#242424"/>
<circle cx="415" cy="208" r="12" fill="#242424"/>
<path fill="#c0c0c0" d="M430 348Q500 340 565 352V358H430Z" opacity=".8"/>
<path fill="#707070" d="M320 1075H610V1375L545 1435V1140H248Z"/>
<path d="M330 1140V1345H545M330 1345L262 1420" fill="none" stroke="#707070" stroke-width="18"/>
<path d="M258 1140V1425H545" fill="none" stroke="#c0c0c0" stroke-width="20"/>
</svg>
<svg class="b" style="left:0px;top:1545px;" width="100" height="147" viewBox="0 0 1033.0 1518.5">
<rect x="367" y="67" width="259" height="234" rx="58" fill="#242424"/><rect x="383" y="83" width="227" height="202" rx="45" fill="#707070"/><rect x="322" y="112" width="259" height="234" rx="58" fill="#242424"/><rect x="338" y="128" width="227" height="202" rx="45" fill="#707070"/><rect x="277" y="157" width="259" height="234" rx="58" fill="#242424"/><rect x="293" y="173" width="227" height="202" rx="45" fill="#707070"/>
<rect x="232" y="202" width="259" height="234" rx="58" fill="#242424"/>
<rect x="248" y="218" width="227" height="202" rx="45" fill="#c0c0c0"/>
</svg>
<svg class="b" style="left:2360px;top:490px" width="360" height="660" viewBox="2360 490 360 660">
<defs>
<filter id="bb" x="-30%" y="-10%" width="160%" height="120%"><feGaussianBlur stdDeviation="4.5"/></filter>
<filter id="bb2" x="-30%" y="-30%" width="160%" height="160%"><feGaussianBlur stdDeviation="1.5"/></filter>
<linearGradient id="bm" gradientUnits="userSpaceOnUse" x1="2655" y1="525" x2="2655" y2="1092">
<stop offset="0" stop-color="#d0d0d0" stop-opacity=".75"/><stop offset=".09" stop-color="#f4f4f4" stop-opacity=".97"/><stop offset=".56" stop-color="#f4f4f4" stop-opacity=".97"/><stop offset=".66" stop-color="#f0f0f0" stop-opacity=".8"/><stop offset=".8" stop-color="#eee" stop-opacity=".5"/><stop offset=".92" stop-color="#eee" stop-opacity=".2"/><stop offset="1" stop-color="#eee" stop-opacity="0"/></linearGradient>
</defs>
<path d="M2656 525C2662 525 2665.5 530 2662 540L2652 569L2636 629L2620 688L2604.5 747L2592.7 806.6L2564 920L2534 1040L2520 1100H2423L2447 1033.6L2477 941L2521.5 806.6L2545 747L2571 688L2599 629L2628 569L2642 540C2646 531 2650 525 2656 525Z" fill="url(#bm)" filter="url(#bb)"/>
<ellipse cx="2648" cy="541" rx="14" ry="17" transform="rotate(20 2648 541)" fill="#8a8a8a" opacity=".55" filter="url(#bb2)"/>
</svg>
<svg class="b" style="left:2440px;top:840px;" width="240" height="300" viewBox="0 0 1214.0 1517.5">
<defs>
<filter id="hb" x="-10%" y="-10%" width="120%" height="120%"><feGaussianBlur stdDeviation="4"/></filter>
<filter id="hb2" x="-30%" y="-50%" width="160%" height="200%"><feGaussianBlur stdDeviation="9"/></filter>
<linearGradient id="pl" x1="0" y1="0" x2="1" y2="0"><stop offset="0" stop-color="#8a807c"/><stop offset=".4" stop-color="#2e201c"/><stop offset="1" stop-color="#120a08"/></linearGradient>
<linearGradient id="pr" x1="0" y1="0" x2="1" y2="0"><stop offset="0" stop-color="#1a0e0a"/><stop offset=".5" stop-color="#4a281c"/><stop offset="1" stop-color="#1a0c08"/></linearGradient>
<linearGradient id="capg" x1="0" y1="0" x2="1" y2="0"><stop offset="0" stop-color="#2a2626"/><stop offset=".18" stop-color="#4e4c4c"/><stop offset=".45" stop-color="#8a8a8a"/><stop offset=".62" stop-color="#9c9a9a"/><stop offset=".76" stop-color="#e6deda"/><stop offset=".9" stop-color="#f0d6c6"/><stop offset="1" stop-color="#b87c5c"/></linearGradient>
<linearGradient id="capt" x1="0" y1="0" x2="1" y2="0"><stop offset="0" stop-color="#2a2625"/><stop offset=".5" stop-color="#8c8c8c"/><stop offset="1" stop-color="#4a403c"/></linearGradient>
<linearGradient id="baseg" x1="0" y1="0" x2="0" y2="1"><stop offset="0" stop-color="#120604"/><stop offset=".45" stop-color="#2e140c"/><stop offset=".6" stop-color="#4a2416"/><stop offset="1" stop-color="#2a120a"/></linearGradient>
<linearGradient id="g1" x1="0" y1="0" x2="1" y2="1"><stop offset="0" stop-color="#c4c4c4"/><stop offset=".5" stop-color="#e2e2e2"/><stop offset="1" stop-color="#cfcfcf"/></linearGradient>
<linearGradient id="g2" x1="0" y1="1" x2="1" y2="0"><stop offset="0" stop-color="#3c3c3c"/><stop offset=".35" stop-color="#a8a8a8"/><stop offset=".65" stop-color="#ececec"/><stop offset="1" stop-color="#d8d8d8"/></linearGradient>
</defs>
<!-- right pillar (back) -->
<path d="M690 320L742 310L792 745L736 755Z" fill="url(#pr)"/>
<ellipse cx="760" cy="780" rx="42" ry="28" fill="#3a2018"/>
<path d="M735 808L792 803L838 1172L786 1182Z" fill="url(#pr)"/>
<!-- left pillar -->
<path d="M243 387L300 375L347 792L290 802Z" fill="url(#pl)"/>
<ellipse cx="318" cy="830" rx="40" ry="30" fill="#3a2c28"/>
<path d="M290 860L350 858L362 1212L305 1218Z" fill="url(#pl)"/>
<!-- glass -->
<path d="M333 420C333 330 430 290 520 290C620 290 690 340 688 430C686 520 640 600 556 742L524 746C440 640 333 540 333 420Z" fill="url(#g1)" opacity=".96"/>
<ellipse cx="560" cy="308" rx="55" ry="18" fill="#fff" filter="url(#hb)"/>
<path d="M524 776L560 770C620 830 772 960 772 1070C772 1120 750 1165 722 1186L445 1200C405 1160 375 1100 384 1040C395 960 470 850 524 776Z" fill="url(#g2)"/>
<!-- middle pillar -->
<path d="M455 250L522 240L572 690L500 702Z" fill="url(#pl)"/>
<ellipse cx="536" cy="726" rx="44" ry="32" fill="#2c1e1a"/>
<path d="M504 762L576 756L628 1190L556 1198Z" fill="url(#pl)"/>
<!-- top cap -->
<path d="M148 255C160 180 300 110 560 68C700 50 812 90 828 170C840 250 780 300 640 325C500 345 330 370 250 385C190 392 145 330 148 255Z" fill="url(#capg)"/>
<ellipse cx="478" cy="172" rx="305" ry="78" transform="rotate(-11 478 172)" fill="url(#capt)" filter="url(#hb)"/>
<path d="M160 300C200 370 260 380 330 368C460 345 560 335 650 318C760 298 820 250 826 200C830 270 770 310 640 330C500 350 330 375 250 388C200 392 170 350 160 300Z" fill="#1a1210" opacity=".7"/>
<!-- base -->
<path d="M262 1320C262 1250 400 1195 620 1182C820 1172 965 1210 972 1285C978 1370 860 1430 640 1445C420 1458 262 1400 262 1320Z" fill="url(#baseg)"/>
<ellipse cx="615" cy="1250" rx="335" ry="62" transform="rotate(-3 615 1250)" fill="#120604" filter="url(#hb)"/>
<ellipse cx="640" cy="1335" rx="230" ry="30" transform="rotate(-4 640 1335)" fill="#5e3020" filter="url(#hb2)"/>
<ellipse cx="640" cy="1332" rx="150" ry="10" transform="rotate(-4 640 1332)" fill="#ffece0" filter="url(#hb)"/>
</svg>
<svg class="b" style="left:740.6px;top:1451.3px" width="480" height="480" viewBox="-240 -240 480 480">
<defs><filter id="jbl" x="-10%" y="-10%" width="120%" height="120%"><feGaussianBlur stdDeviation="1.3"/></filter></defs>
<g fill="none" filter="url(#jbl)">
<circle r="219.7" stroke="#1d1d1d" stroke-width="4.6"/>
<circle r="213.6" stroke="#232323" stroke-width="3.2"/>
<circle r="200" stroke="#040404" stroke-width="10"/>
<circle r="103.5" stroke="#2b2b2b" stroke-width="9.5"/>
<circle r="106.5" stroke="#343434" stroke-width="2.5"/>
</g></svg>
<svg class="b" style="left:2487px;top:1451.3px" width="480" height="480" viewBox="-240 -240 480 480">
<defs><filter id="jbr" x="-10%" y="-10%" width="120%" height="120%"><feGaussianBlur stdDeviation="1.3"/></filter></defs>
<g fill="none" filter="url(#jbr)">
<circle r="219.7" stroke="#1d1d1d" stroke-width="4.6"/>
<circle r="213.6" stroke="#232323" stroke-width="3.2"/>
<circle r="200" stroke="#040404" stroke-width="10"/>
<circle r="103.5" stroke="#2b2b2b" stroke-width="9.5"/>
<circle r="106.5" stroke="#343434" stroke-width="2.5"/>
</g></svg>
</body></html>
